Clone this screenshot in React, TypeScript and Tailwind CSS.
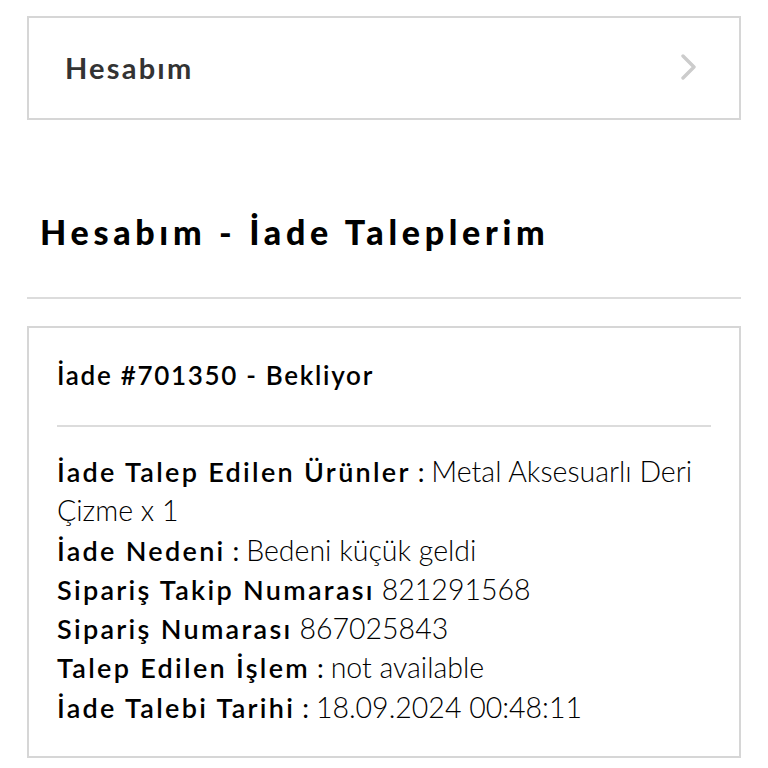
const rows: { label: string; sep?: boolean; value: string }[] = [
  { label: 'İade Talep Edilen Ürünler', sep: true, value: 'Metal Aksesuarlı Deri Çizme x 1' },
  { label: 'İade Nedeni', sep: true, value: 'Bedeni küçük geldi' },
  { label: 'Sipariş Takip Numarası', value: '821291568' },
  { label: 'Sipariş Numarası', value: '867025843' },
  { label: 'Talep Edilen İşlem', sep: true, value: 'not available' },
  { label: 'İade Talebi Tarihi', sep: true, value: '18.09.2024 00:48:11' },
]

export default function App() {
  return (
    <div className="min-h-screen bg-white px-[27px] pt-[16px]" style={{ fontFamily: 'Lato, "Noto Sans", sans-serif' }}>
      <div className="flex h-[104px] items-center justify-between border-2 border-[#d6d6d6] pl-[36px] pr-[42px]">
        <span className="text-[29px] font-bold tracking-[2.2px] text-[#333]">Hesabım</span>
        <svg width="16" height="26" viewBox="0 0 16 26" fill="none" className="-mt-[2px] text-[#cccccc]">
          <polyline points="2,2 13,13 2,24" stroke="currentColor" strokeWidth="3.4" strokeLinecap="round" strokeLinejoin="round" />
        </svg>
      </div>

      <h1 className="mt-[88px] pl-[13px] text-[34px] font-black leading-[48px] tracking-[4.7px] text-black">
        Hesabım - İade Taleplerim
      </h1>

      <div className="mt-[41px] h-[2px] bg-[#dcdcdc]" />

      <div className="mt-[27px] border-2 border-[#d6d6d6] px-[28px] pb-[29px] pt-[21px]">
        <div className="pb-[24px] text-[26px] font-semibold leading-[52px] tracking-[1.7px] text-black">
          İade #701350 - Bekliyor
        </div>
        <div className="h-[2px] bg-[#dcdcdc]" />
        <div className="pt-[25px] text-[27px] leading-[39.3px] text-black">
          {rows.map(r => (
            <div key={r.label}>
              <span className="font-semibold tracking-[2.3px]">{r.label}</span>
              {r.sep ? ' : ' : ' '}
              <span className="text-[28.5px] font-light">{r.value}</span>
            </div>
          ))}
        </div>
      </div>
    </div>
  )
}
